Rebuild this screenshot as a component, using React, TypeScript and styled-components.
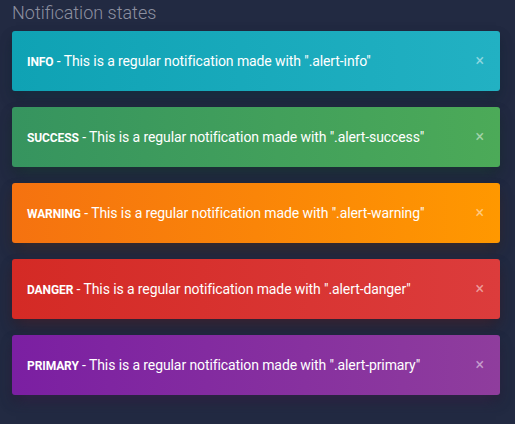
import styled, { createGlobalStyle } from 'styled-components'

const GlobalStyle = createGlobalStyle`
  html, body {
    margin: 0;
    padding: 0;
    background: #222a42;
  }
  body {
    font-family: Roboto, "Liberation Sans", sans-serif;
    -webkit-font-smoothing: antialiased;
  }
`

const Page = styled.div`
  width: 515px;
  height: 424px;
  box-sizing: border-box;
  padding: 0 15px 0 12px;
  background: #222a42;
  overflow: hidden;
`

const Title = styled.h4`
  margin: 0 0 8px;
  padding-top: 3px;
  font-size: 18px;
  font-weight: 300;
  line-height: 20px;
  color: #8d90a0;
`

const List = styled.div`
  display: flex;
  flex-direction: column;
  gap: 16px;
`

const Alert = styled.div<{ $from: string; $to: string; $glow: string }>`
  position: relative;
  display: flex;
  align-items: center;
  height: 60px;
  box-sizing: border-box;
  padding: 0 40px 0 15px;
  border-radius: 3px;
  background: linear-gradient(to right, ${p => p.$from}, ${p => p.$to});
  box-shadow: 0 8px 14px -4px ${p => p.$glow}, 0 6px 12px rgba(0, 0, 0, 0.25);
  color: #fff;
`

const Message = styled.span`
  font-size: 14px;
  font-weight: 400;
  line-height: 20px;
  letter-spacing: -0.1px;

  b {
    font-size: 12px;
    font-weight: 700;
    text-transform: uppercase;
  }
`

const Close = styled.button`
  position: absolute;
  right: 16px;
  top: 50%;
  transform: translateY(-50%);
  padding: 0;
  border: 0;
  background: none;
  color: rgba(255, 255, 255, 0.5);
  font-family: Roboto, "Liberation Sans", sans-serif;
  font-size: 16px;
  line-height: 1;
  cursor: pointer;
`

const ALERTS = [
  { kind: 'info', from: '#0fa2b4', to: '#22b1c3', glow: 'rgba(20, 60, 80, 0.6)' },
  { kind: 'success', from: '#36945f', to: '#4caa58', glow: 'rgba(30, 70, 60, 0.6)' },
  { kind: 'warning', from: '#f57210', to: '#ff9800', glow: 'rgba(100, 60, 40, 0.5)' },
  { kind: 'danger', from: '#d42a25', to: '#dc3c3c', glow: 'rgba(100, 40, 50, 0.5)' },
  { kind: 'primary', from: '#7b1fa2', to: '#8f3d9d', glow: 'rgba(70, 40, 90, 0.6)' },
]

export default function App() {
  return (
    <Page>
      <GlobalStyle />
      <Title>Notification states</Title>
      <List>
        {ALERTS.map(a => (
          <Alert key={a.kind} $from={a.from} $to={a.to} $glow={a.glow}>
            <Message>
              <b>{a.kind}</b> - This is a regular notification made with ".alert-{a.kind}"
            </Message>
            <Close aria-label="Close">×</Close>
          </Alert>
        ))}
      </List>
    </Page>
  )
}
